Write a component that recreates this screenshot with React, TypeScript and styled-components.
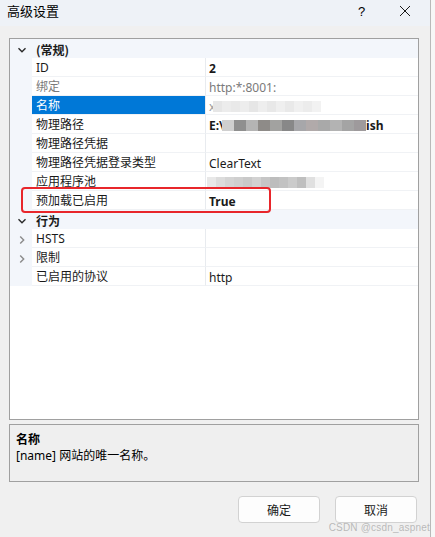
import React from 'react';
import styled, { createGlobalStyle, css } from 'styled-components';

type Row =
  | { kind: 'category'; label: string; open: boolean }
  | {
      kind: 'prop';
      label: string;
      value?: React.ReactNode;
      bold?: boolean;
      disabled?: boolean;
      selected?: boolean;
      expandable?: boolean;
    };

const GlobalStyle = createGlobalStyle`
  body {
    margin: 0;
    background: #f7f7f7;
    font-family: "Noto Sans", "Noto Sans CJK SC", sans-serif;
    font-size: 12px;
    color: #000;
  }
`;

const Smudge: React.FC<{ colors: string[]; cell?: number }> = ({ colors, cell = 9 }) => (
  <SmudgeRow>
    {colors.map((c, i) => (
      <SmudgeCell key={i} style={{ background: c, width: cell }} />
    ))}
  </SmudgeRow>
);

const getRows = (): Row[] => [
  { kind: 'category', label: '(常规)', open: true },
  { kind: 'prop', label: 'ID', value: '2', bold: true },
  { kind: 'prop', label: '绑定', value: 'http:*:8001:', disabled: true },
  {
    kind: 'prop',
    label: '名称',
    selected: true,
    value: (
      <>
        <Faint>x</Faint>
        <Smudge
          colors={['#e6e6e6', '#ececec', '#e9e9e9', '#ededed', '#e6e6e6', '#eeeeee', '#e8e8e8', '#efefef', '#e9e9e9', '#f0f0f0', '#ececec', '#f2f2f2']}
        />
      </>
    ),
  },
  {
    kind: 'prop',
    label: '物理路径',
    bold: true,
    value: (
      <>
        E:\
        <Smudge
          cell={12}
          colors={['#cfcfcf', '#8f8f8f', '#b4b4b4', '#8e8b88', '#a2a2a0', '#888888', '#a7a7aa', '#b1aaaa', '#a9a9a9', '#b3b3b3', '#a4a4a4', '#9e9a9c']}
        />
        ish
      </>
    ),
  },
  { kind: 'prop', label: '物理路径凭据', value: '' },
  { kind: 'prop', label: '物理路径凭据登录类型', value: 'ClearText' },
  {
    kind: 'prop',
    label: '应用程序池',
    value: (
      <Smudge
        colors={['#e8e8e8', '#dcdcdc', '#d4d4d4', '#cfcfcf', '#c9c9c9', '#d2d2d2', '#c6c6c6', '#bdbdbd', '#c2c2c2', '#cbcbcb', '#bfbfbf', '#e0e0e0', '#f4f4f4']}
      />
    ),
  },
  { kind: 'prop', label: '预加载已启用', value: 'True', bold: true },
  { kind: 'category', label: '行为', open: true },
  { kind: 'prop', label: 'HSTS', value: '', expandable: true },
  { kind: 'prop', label: '限制', value: '', expandable: true },
  { kind: 'prop', label: '已启用的协议', value: 'http' },
];

const Chevron: React.FC<{ open: boolean }> = ({ open }) => (
  <svg width="10" height="10" viewBox="0 0 10 10">
    <path
      d={open ? 'M1.5 3.2 L5 6.7 L8.5 3.2' : 'M3.2 1.5 L6.7 5 L3.2 8.5'}
      fill="none"
      stroke={open ? '#2a2a2a' : '#8a8a8a'}
      strokeWidth="1.4"
    />
  </svg>
);

const App: React.FC = () => {
  const rows = getRows();
  return (
    <>
      <GlobalStyle />
      <Window>
        <TitleBar>
          <Title>高级设置</Title>
          <TitleButtons>
            <HelpMark>?</HelpMark>
            <CloseIcon width="12" height="12" viewBox="0 0 12 12">
              <path d="M1 1 L11 11 M11 1 L1 11" stroke="#1a1a1a" strokeWidth="1" />
            </CloseIcon>
          </TitleButtons>
        </TitleBar>
        <Body>
          <Grid>
            {rows.map((row, i) =>
              row.kind === 'category' ? (
                <CategoryRow key={i}>
                  <Gutter>
                    <Chevron open={row.open} />
                  </Gutter>
                  <CategoryLabel>{row.label}</CategoryLabel>
                </CategoryRow>
              ) : (
                <PropRow key={i}>
                  <Gutter>{row.expandable && <Chevron open={false} />}</Gutter>
                  <LabelCell $selected={!!row.selected} $disabled={!!row.disabled}>
                    {row.label}
                  </LabelCell>
                  <ValueCell $bold={!!row.bold} $disabled={!!row.disabled}>
                    {row.value}
                  </ValueCell>
                </PropRow>
              ),
            )}
            <Highlight />
          </Grid>
          <Description>
            <DescTitle>名称</DescTitle>
            <DescText>[name] 网站的唯一名称。</DescText>
          </Description>
          <Footer>
            <Button>确定</Button>
            <Button>取消</Button>
          </Footer>
        </Body>
        <Watermark>CSDN @csdn_aspnet</Watermark>
      </Window>
    </>
  );
};

export default App;

const Window = styled.div`
  position: relative;
  width: 431px;
  height: 537px;
  background: #f0f0f0;
  border-right: 1px solid #b9b9b9;
  box-sizing: border-box;
  overflow: hidden;
`;

const TitleBar = styled.div`
  display: flex;
  align-items: center;
  justify-content: space-between;
  height: 26px;
  padding-left: 7px;
  background: #eef2f7;
`;

const Title = styled.div`
  font-family: "Noto Sans CJK SC", sans-serif;
  font-size: 13px;
  line-height: 16px;
  margin-top: -5px;
`;

const TitleButtons = styled.div`
  display: flex;
  align-items: center;
  margin-top: -4px;
`;

const HelpMark = styled.span`
  font-family: "Liberation Sans", sans-serif;
  font-size: 13px;
  width: 43px;
  margin-right: -2px;
`;

const CloseIcon = styled.svg`
  margin-right: 19px;
`;

const Body = styled.div`
  display: flex;
  flex-direction: column;
  padding: 12px 11px 0 9px;
`;

const Grid = styled.div`
  position: relative;
  height: 382px;
  box-sizing: border-box;
  border: 1px solid #a0a0a0;
  background: #ffffff;
`;

const rowBase = css`
  display: flex;
  height: 19px;
  box-sizing: border-box;
  line-height: 19px;
  font-size: 12px;
  white-space: nowrap;
`;

const CategoryRow = styled.div`
  ${rowBase};
  background: #f3f6fb;
`;

const PropRow = styled.div`
  ${rowBase};
`;

const Gutter = styled.div`
  display: flex;
  align-items: center;
  justify-content: center;
  width: 21px;
  flex: none;
  padding-left: 1px;
  background: #f3f6fb;
  svg {
    margin-top: 2px;
  }
`;

const CategoryLabel = styled.div`
  padding: 2px 0 0 4px;
  font-weight: 700;
  font-family: "Noto Sans CJK SC", sans-serif;
  color: #1a1a1a;
  line-height: 17px;
`;

const LabelCell = styled.div<{ $selected: boolean; $disabled: boolean }>`
  flex: none;
  box-sizing: border-box;
  width: 174px;
  padding: 2px 0 0 4px;
  line-height: 16px;
  border-right: 1px solid #e8ebef;
  border-bottom: 1px solid #f0f2f5;
  color: ${({ $selected, $disabled }) => ($selected ? '#ffffff' : $disabled ? '#7a7a7a' : '#1a1a1a')};
  background: ${({ $selected }) => ($selected ? '#0078d7' : 'transparent')};
`;

const ValueCell = styled.div<{ $bold: boolean; $disabled: boolean }>`
  display: flex;
  align-items: center;
  flex: 1;
  padding: 2px 0 0 3px;
  border-bottom: 1px solid #f0f2f5;
  font-weight: ${({ $bold }) => ($bold ? 700 : 400)};
  color: ${({ $disabled }) => ($disabled ? '#7a7a7a' : '#1a1a1a')};
`;

const Faint = styled.span`
  color: #9a9a9a;
`;

const SmudgeRow = styled.span`
  display: inline-flex;
  height: 11px;
  margin: 0 0 0 -2px;
`;

const SmudgeCell = styled.span`
  display: block;
  height: 100%;
`;

const Highlight = styled.div`
  position: absolute;
  left: 11px;
  top: 148px;
  width: 250px;
  height: 26px;
  box-sizing: border-box;
  border: 2px solid #e8262b;
  border-radius: 4px;
  pointer-events: none;
`;

const Description = styled.div`
  margin-top: 4px;
  height: 58px;
  box-sizing: border-box;
  padding: 5px 6px;
  border: 1px solid #a0a0a0;
  background: #efefef;
`;

const DescTitle = styled.div`
  font-family: "Noto Sans CJK SC", sans-serif;
  font-weight: 700;
  line-height: 17px;
`;

const DescText = styled.div`
  line-height: 17px;
`;

const Footer = styled.div`
  display: flex;
  justify-content: flex-end;
  gap: 15px;
  margin-top: 14px;
  padding-right: 2px;
`;

const Button = styled.button`
  width: 82px;
  height: 27px;
  border: 1px solid #d2d2d2;
  border-radius: 4px;
  background: #fdfdfd;
  font-family: "Noto Sans CJK SC", sans-serif;
  font-size: 12px;
  color: #1a1a1a;
`;

const Watermark = styled.div`
  position: absolute;
  right: 0;
  bottom: 4px;
  font-family: "Liberation Sans", sans-serif;
  font-size: 10px;
  letter-spacing: 0.2px;
  color: rgba(160, 160, 160, 0.7);
`;
